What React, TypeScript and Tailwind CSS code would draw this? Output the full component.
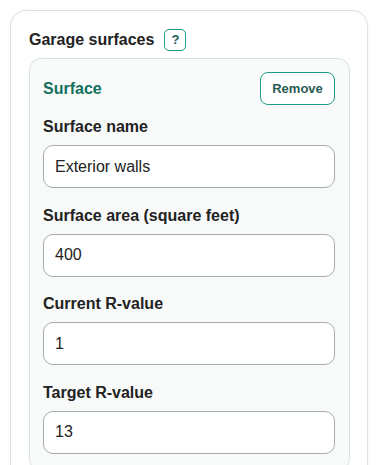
const fields = [
  { label: "Surface name", value: "Exterior walls" },
  { label: "Surface area (square feet)", value: "400" },
  { label: "Current R-value", value: "1" },
  { label: "Target R-value", value: "13" },
];

export default function App() {
  return (
    <main className="min-h-screen bg-white pl-[10px] pr-[11px] pt-[10px] font-['Liberation_Sans',Arial,sans-serif] text-[#222]">
      <section className="rounded-[16px] border border-[#d9e4e0] bg-white pl-[18px] pr-[17px] pt-[18px] pb-6 shadow-[0_1px_4px_rgba(0,0,0,0.05)]">
        <div className="flex h-[22px] items-center gap-[10px]">
          <h2 className="text-base font-bold leading-6">Garage surfaces</h2>
          <button
            type="button"
            className="flex h-[22px] w-[22px] items-center justify-center rounded-[5px] border border-[#1e9c84] text-[13px] font-bold text-[#1d5c58]"
          >
            ?
          </button>
        </div>

        <div className="mt-[7px] rounded-[12px] border border-[#d6e2de] bg-[#f8faf9] pl-[13px] pr-[14px] pt-[13px] pb-4">
          <div className="flex items-center justify-between">
            <h3 className="text-base font-bold text-[#12705f]">Surface</h3>
            <button
              type="button"
              className="h-[33px] w-[75px] rounded-[8px] border border-[#1e9c84] bg-white text-[13px] font-bold text-[#2b5a54]"
            >
              Remove
            </button>
          </div>

          <div className="mt-[12px] flex flex-col gap-[17.5px]">
            {fields.map((f) => (
              <label key={f.label} className="flex flex-col gap-[8px]">
                <span className="text-base font-bold leading-5">{f.label}</span>
                <input
                  defaultValue={f.value}
                  className="h-[43px] w-full rounded-[10px] border border-[#a3adab] bg-white px-[11px] text-base text-[#222] outline-none"
                />
              </label>
            ))}
          </div>
        </div>
      </section>
    </main>
  );
}
